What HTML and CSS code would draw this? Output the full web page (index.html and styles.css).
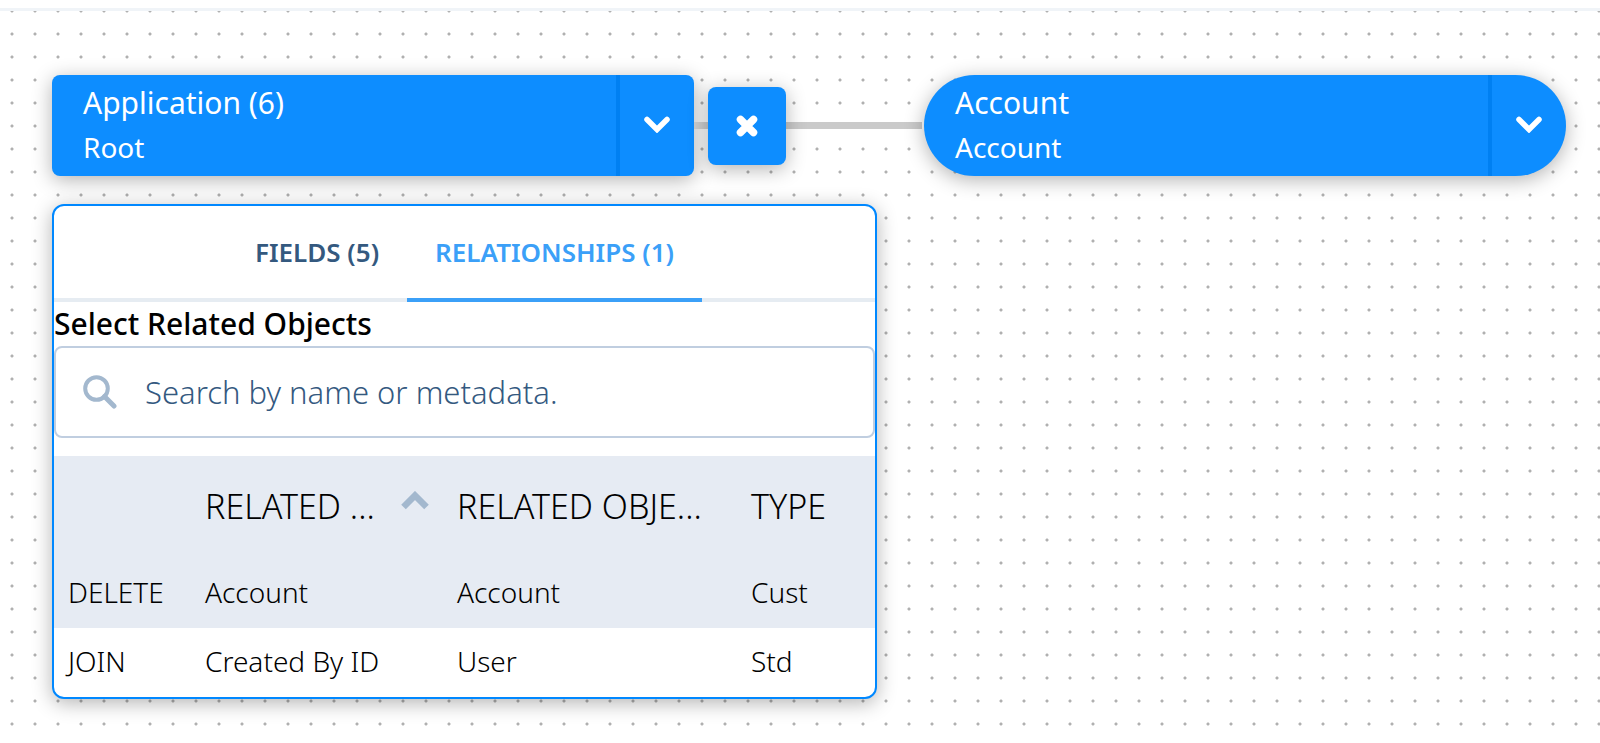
FILE: index.html
```
<!DOCTYPE html>
<html lang="en">
<head>
  <meta charset="UTF-8" />
  <meta name="viewport" content="width=device-width, initial-scale=1.0"/>
  <title>Application Relationships</title>
  <link rel="stylesheet" href="styles.css">
</head>
<body>

<header class="topbar"></header>

<main class="canvas">
  <div class="nodes">
    <div class="node">
      <div class="node-text">
        <div class="node-name">Application (6)</div>
        <div class="node-object">Root</div>
      </div>
      <button type="button" class="node-toggle" aria-label="Toggle Application">
        <svg width="26" height="17" viewBox="0 0 26 17"><path d="M3 3.500l10 10 10-10" fill="none" stroke="#fff" stroke-width="5.5" stroke-linecap="round"/></svg>
      </button>
    </div>

    <div class="connector">
      <button type="button" class="remove" aria-label="Remove join">
        <svg width="22" height="22" viewBox="0 0 22 22"><path d="M4.500 4.500l13 13M17.500 4.500l-13 13" fill="none" stroke="#fff" stroke-width="7.5" stroke-linecap="round"/></svg>
      </button>
    </div>

    <div class="node node-round">
      <div class="node-text">
        <div class="node-name">Account</div>
        <div class="node-object">Account</div>
      </div>
      <button type="button" class="node-toggle" aria-label="Toggle Account">
        <svg width="26" height="17" viewBox="0 0 26 17"><path d="M3 3.500l10 10 10-10" fill="none" stroke="#fff" stroke-width="5.5" stroke-linecap="round"/></svg>
      </button>
    </div>
  </div>

  <section class="panel">
    <div class="tabs" role="tablist">
      <button type="button" class="tab" role="tab">FIELDS (5)</button>
      <button type="button" class="tab active" role="tab" aria-selected="true">RELATIONSHIPS (1)</button>
    </div>

    <label class="search-label" for="search">Select Related Objects</label>
    <div class="search">
      <svg width="34" height="34" viewBox="0 0 34 34"><g fill="none" stroke="#a3b8ce" stroke-width="4"><circle cx="13.5" cy="13.5" r="11.3"/><path d="M21.5 21.5l9.500 9.500" stroke-width="5" stroke-linecap="round"/></g></svg>
      <input type="text" id="search" placeholder="Search by name or metadata.">
    </div>

    <table>
      <colgroup>
        <col class="col-action">
        <col class="col-field">
        <col class="col-object">
        <col>
      </colgroup>
      <thead>
        <tr>
          <th></th>
          <th>
            <div class="sorted">
              <span>RELATED ...</span>
              <svg width="28" height="19" viewBox="0 0 28 19"><path d="M2.5 16L14 4.500 25.500 16" fill="none" stroke="#a3b8ce" stroke-width="6.5"/></svg>
            </div>
          </th>
          <th>RELATED OBJE...</th>
          <th>TYPE</th>
        </tr>
      </thead>
      <tbody>
        <tr class="selected"><td>DELETE</td><td>Account</td><td>Account</td><td>Cust</td></tr>
        <tr><td>JOIN</td><td>Created By ID</td><td>User</td><td>Std</td></tr>
      </tbody>
    </table>
  </section>
</main>

</body>
</html>
```

FILE: styles.css
```
* {
  box-sizing: border-box;
}
body {
  margin: 0;
  min-height: 100vh;
  display: flex;
  flex-direction: column;
  font-family: "Noto Sans", "Open Sans", sans-serif;
  background: #fff;
  color: #000;
}
button {
  padding: 0;
  border: none;
  background: none;
  font-family: inherit;
  cursor: pointer;
}
svg {
  display: block;
  flex: none;
}
.topbar {
  height: 11px;
  border-bottom: 3px solid #f0f4f8;
}
.canvas {
  flex: 1;
  padding: 64px 34px 40px 52px;
  background-image: radial-gradient(circle at 12px 12px, #b0b0b0 1px, transparent 2px);
  background-size: 23px 23px;
  background-position: 0 -12px;
}

/* nodes */
.nodes {
  display: flex;
  align-items: center;
  margin-bottom: 28px;
}
.node {
  flex: 1;
  display: flex;
  height: 101px;
  border-radius: 8px;
  background: #0d8dff;
  color: #fff;
  overflow: hidden;
  box-shadow: 0 4px 20px rgba(0, 0, 0, 0.3);
}
.node-round {
  border-radius: 51px;
}
.node-text {
  flex: 1;
  padding: 6px 0 0 31px;
}
.node-name {
  font-size: 30px;
  line-height: 44px;
}
.node-object {
  font-size: 28px;
  line-height: 44px;
}
.node-toggle {
  width: 78px;
  padding-bottom: 3px;
  border-left: 4px solid #0080f2;
  display: flex;
  align-items: center;
  justify-content: center;
}
.connector {
  width: 230px;
  padding-left: 14px;
  background: linear-gradient(#cacaca, #cacaca) left center / 228px 7px no-repeat;
}
.remove {
  width: 78px;
  height: 78px;
  border-radius: 8px;
  background: #0d8dff;
  display: flex;
  align-items: center;
  justify-content: center;
  box-shadow: 0 4px 20px rgba(0, 0, 0, 0.3);
}

/* related objects panel */
.panel {
  width: calc(50% + 68px);
  border: 2px solid #0088ff;
  border-radius: 12px;
  background: #fff;
  overflow: hidden;
  box-shadow: 0 4px 20px rgba(0, 0, 0, 0.3);
}
.tabs {
  display: flex;
  justify-content: center;
  height: 96px;
  box-shadow: inset 0 -4px #e6ecf2;
}
.tab {
  padding: 0 28px;
  border-bottom: 4px solid transparent;
  font-size: 26px;
  font-weight: 600;
  color: #34597f;
}
.tab.active {
  border-color: #3ba0f8;
  color: #3ba0f8;
}
.search-label {
  display: block;
  height: 44px;
  font-size: 30px;
  font-weight: 500;
  line-height: 44px;
}
.search {
  display: flex;
  align-items: center;
  height: 92px;
  margin-bottom: 18px;
  padding: 0 27px;
  border: 2px solid #c0cee0;
  border-radius: 8px;
}
.search input {
  flex: 1;
  min-width: 0;
  margin-left: 28px;
  padding: 0;
  border: none;
  outline: none;
  background: none;
  font-family: inherit;
  font-size: 31px;
  font-weight: 300;
}
.search input::placeholder {
  color: #34597f;
  opacity: 1;
}
table {
  width: 100%;
  table-layout: fixed;
  border-collapse: collapse;
}
.col-action {
  width: 137px;
}
.col-field {
  width: 252px;
}
.col-object {
  width: 294px;
}
th, td {
  padding: 0 0 3px 14px;
  font-weight: 300;
  text-align: left;
  white-space: nowrap;
}
th {
  height: 103px;
  font-size: 34px;
}
td {
  height: 69px;
  font-size: 28px;
}
thead, .selected {
  background: #e6ebf3;
}
.sorted {
  display: flex;
  align-items: center;
  justify-content: space-between;
  padding-right: 14px;
}
.sorted svg {
  margin-bottom: 12px;
}
```
